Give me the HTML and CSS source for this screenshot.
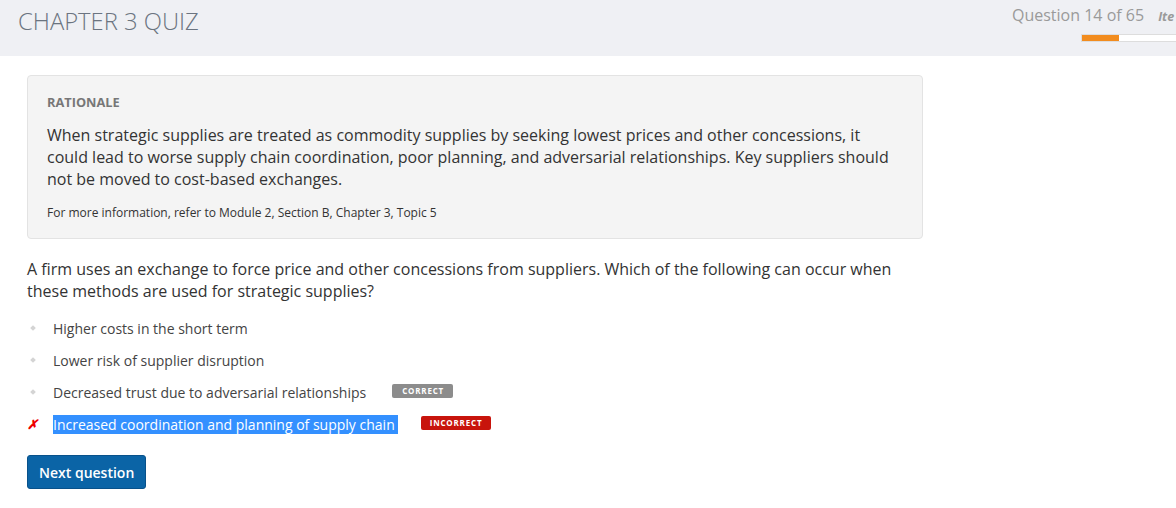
FILE: index.html
```html
<!DOCTYPE html>
<html>
<head>
<meta charset="utf-8">
<link rel="stylesheet" href="styles.css">
</head>
<body>
<header class="topbar">
  <h1 class="title">CHAPTER 3 QUIZ</h1>
  <div class="progress-area">
    <div class="progress-row">
      <span class="qcount">Question 14 of 65</span>
      <span class="item">Ite</span>
    </div>
    <div class="bar"><div class="bar-fill" style="width:37px"></div></div>
  </div>
</header>
<main class="content">
  <section class="rationale">
    <div class="r-label">RATIONALE</div>
    <p class="r-text">When strategic supplies are treated as commodity supplies by seeking lowest prices and other concessions, it could lead to worse supply chain coordination, poor planning, and adversarial relationships. Key suppliers should not be moved to cost-based exchanges.</p>
    <p class="r-ref">For more information, refer to Module 2, Section B, Chapter 3, Topic 5</p>
  </section>
  <p class="question">A firm uses an exchange to force price and other concessions from suppliers. Which of the following can occur when these methods are used for strategic supplies?</p>
  <ul class="options">
    <li class="opt"><span class="mark dot"></span><span class="otext">Higher costs in the short term</span></li>
    <li class="opt"><span class="mark dot"></span><span class="otext">Lower risk of supplier disruption</span></li>
    <li class="opt"><span class="mark dot"></span><span class="otext">Decreased trust due to adversarial relationships</span><span class="badge badge-correct">CORRECT</span></li>
    <li class="opt"><span class="mark x">✗</span><span class="otext selected">Increased coordination and planning of supply chain</span><span class="badge badge-incorrect">INCORRECT</span></li>
  </ul>
  <button class="next">Next question</button>
</main>
</body>
</html>
```
FILE: styles.css
```css
* { box-sizing: border-box; }
html, body { margin: 0; padding: 0; }
body {
  font-family: "Open Sans", "Liberation Sans", sans-serif;
  color: #333;
  background: #fff;
  width: 1176px;
  height: 508px;
  overflow: hidden;
}
.topbar {
  height: 56px;
  background: #eff0f4;
  display: flex;
  justify-content: space-between;
  align-items: flex-start;
}
.title {
  margin: 0;
  padding: 5px 0 0 18px;
  font-size: 23.8px;
  font-weight: 300;
  color: #6b7480;
  line-height: 32px;
}
.progress-area {
  padding-top: 4px;
  display: flex;
  flex-direction: column;
  align-items: flex-start;
  margin-left: auto;
  width: 164px;
}
.progress-row {
  display: flex;
  align-items: baseline;
  white-space: nowrap;
}
.qcount {
  font-size: 16px;
  color: #9a9a9a;
  line-height: 22px;
}
.item {
  font-size: 12.5px;
  font-weight: 700;
  font-style: italic;
  color: #9a9a9a;
  margin-left: 14px;
}
.bar {
  margin-top: 8px;
  margin-left: 69px;
  width: 100px;
  height: 8px;
  background: #fff;
  border: 1px solid #ddd;
  border-right: none;
}
.bar-fill {
  height: 100%;
  background: #f28c1e;
}
.content {
  padding: 19px 0 0 27px;
}
.rationale {
  width: 896px;
  background: #f4f4f4;
  border: 1px solid #e3e3e3;
  border-radius: 4px;
  padding: 18px 19px 17px 19px;
}
.r-label {
  font-size: 12.8px;
  font-weight: 700;
  color: #777;
  line-height: 16px;
}
.r-text {
  margin: 14px 0 0 0;
  font-size: 16px;
  line-height: 22px;
  color: #333;
}
.r-ref {
  margin: 15px 0 0 0;
  font-size: 12px;
  line-height: 16px;
  color: #333;
}
.question {
  margin: 19px 0 0 0;
  width: 880px;
  font-size: 16px;
  line-height: 22px;
  color: #333;
}
.options {
  list-style: none;
  margin: 10px 0 0 0;
  padding: 0;
}
.opt {
  display: flex;
  align-items: center;
  height: 32px;
  font-size: 14px;
}
.mark {
  width: 26px;
  display: inline-flex;
  align-items: center;
  padding-left: 3px;
}
.dot::before {
  content: "";
  width: 4px;
  height: 4px;
  background: #d4d4d4;
  transform: rotate(45deg);
  display: block;
  margin-left: 1px;
}
.x {
  color: #e00;
  font-size: 13px;
  font-weight: 700;
  font-style: italic;
  padding-left: 0;
}
.otext {
  color: #444;
  line-height: 19px;
}
.selected {
  background: #3390ff;
  color: #fff;
  padding-right: 3px;
}
.badge {
  display: inline-block;
  font-size: 8px;
  font-weight: 700;
  letter-spacing: 0.8px;
  color: #fff;
  line-height: 14px;
  height: 14px;
  border-radius: 2px;
  padding: 0 9px;
  margin-bottom: 2px;
}
.badge-correct {
  background: #8c8c8c;
  margin-left: 26px;
  padding: 0 9px 0 10px;
}
.badge-incorrect {
  background: #c8140c;
  margin-left: 23px;
}
.next {
  margin-top: 15px;
  background: #0b64a6;
  color: #fff;
  border: 1px solid #08518a;
  border-radius: 3px;
  font-family: "Open Sans", "Liberation Sans", sans-serif;
  font-size: 14px;
  font-weight: 600;
  height: 34px;
  padding: 0 11px;
}
```
